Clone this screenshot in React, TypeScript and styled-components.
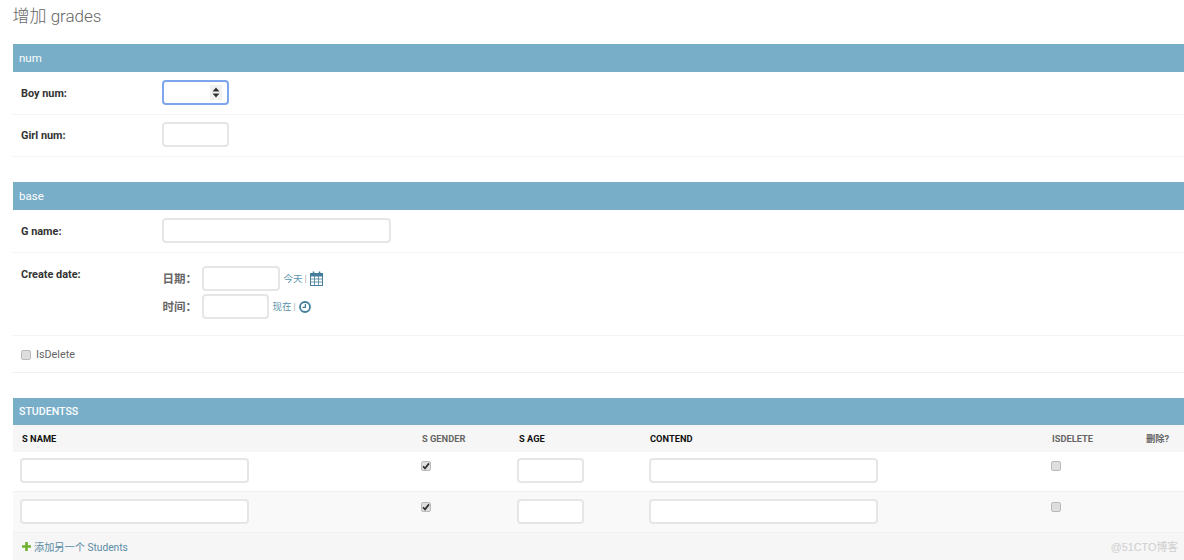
import React from "react";
import styled, { createGlobalStyle } from "styled-components";

const Global = createGlobalStyle`
  html, body { margin: 0; padding: 0; background: #fff; }
  body { font-family: Roboto, "Noto Sans CJK SC", "Liberation Sans", sans-serif; height: 560px; overflow: hidden; }
`;
const Page = styled.div`position: relative; height: 560px; overflow: hidden; padding-left: 13px;`;
const Title = styled.h1`
  margin: 0 0 0 -0.5px; height: 44px; padding-top: 6px; box-sizing: border-box; font-size: 17px; line-height: 21px;
  font-weight: 300; color: #666;
`;
const Module = styled.section`margin-bottom: 25px;`;
const ModuleHead = styled.h2<{ $h?: number; $small?: boolean }>`
  margin: 0; height: ${p => p.$h ?? 28}px; box-sizing: border-box; padding-left: 6px; background: #79aec8; color: #fbfdfe;
  font-size: ${p => (p.$small ? 10.6 : 11.5)}px; line-height: ${p => p.$h ?? 28}px; font-weight: ${p => (p.$small ? 500 : 400)};
`;
const Row = styled.div<{ $h: number; $top?: number }>`
  display: flex; height: ${p => p.$h}px; box-sizing: border-box; border-bottom: 1px solid #f3f3f3;
  padding-left: 8px; padding-top: ${p => p.$top ?? 8}px;
`;
const Label = styled.label<{ $top?: number }>`
  width: 141.4px; flex: none; font-size: 10.9px; line-height: 13px; font-weight: 700; color: #333; padding-top: ${p => p.$top ?? 7}px;
`;
const Field = styled.div`position: relative; height: fit-content;`;
const Input = styled.input<{ $w: number; $focus?: boolean }>`
  display: block; width: ${p => p.$w}px; height: 25px; box-sizing: border-box; padding: 0 5px; background: #fff;
  border: 2px solid ${p => (p.$focus ? "#7ea6ee" : "#e6e6e6")}; border-radius: 4px; outline: none;
`;
const Spinner = styled.span`
  position: absolute; right: 7px; top: 5px; width: 12px; height: 15px; background: #f1f1f1;
  display: flex; align-items: center; justify-content: center;
`;
const DateBlock = styled.div`display: flex; flex-direction: column; gap: 3px; padding-top: 5px;`;
const DateLine = styled.div`display: flex; align-items: center; height: 25px;`;
const DateLabel = styled.span`
  width: 39.5px; flex: none; font-size: 11.5px; font-weight: 700; color: #666; line-height: 25px; position: relative; top: 1px;
`;
const Shortcut = styled.a`
  margin-left: 3.5px; font-size: 9.5px; color: #5a93ab; display: flex; align-items: center; gap: 2px; line-height: 14px;
`;
const Sep = styled.span`color: #aaa; font-size: 9px;`;
const Plain = styled.span`font-size: 10.8px; color: #666; margin-left: 5px; line-height: 14px;`;
const CheckRow = styled.div`display: flex; align-items: center; height: 37px; box-sizing: border-box; padding: 1px 0 0 8px; border-bottom: 1px solid #f0f0f0;`;
const Box = styled.span`
  display: flex; align-items: center; justify-content: center; width: 8px; height: 8px; border: 1px solid #bbb;
  border-radius: 2px; background: #dedede; flex: none;
`;
const columns = "401px 97px 131px 401px 95px 1fr";
const TableHead = styled.div`
  display: grid; grid-template-columns: ${columns}; height: 27px; background: #f6f6f6; align-items: center;
`;
const Th = styled.div<{ $muted?: boolean; $pad?: number }>`
  padding-left: ${p => p.$pad ?? 8}px; font-size: 9.3px; font-weight: 700; color: ${p => (p.$muted ? "#666" : "#111")};
  text-transform: uppercase; line-height: 12px;
`;
const TableRow = styled.div<{ $alt?: boolean; $h: number }>`
  display: grid; grid-template-columns: ${columns}; height: ${p => p.$h}px; box-sizing: border-box;
  background: ${p => (p.$alt ? "#f9f9f9" : "#fff")}; border-bottom: 1px solid #f0f0f0; align-items: start;
`;
const Td = styled.div<{ $top: number; $left: number }>`padding: ${p => p.$top}px 0 0 ${p => p.$left}px;`;
const AddRow = styled.div`
  display: flex; align-items: center; height: 27px; gap: 3px; padding-left: 9px; background: #f6f6f6;
  font-size: 10.2px; color: #5a8ba5;
`;
const Watermark = styled.span`
  position: absolute; right: 6px; bottom: 6px; font-size: 10.8px; line-height: 14px; color: #cfcfcf;
  font-family: "Liberation Sans", "Noto Sans CJK SC", sans-serif;
`;

const Check = () => (
  <Box>
    <svg width="8" height="8" viewBox="0 0 8 8"><path d="M1 4.2 3 6.4 7 1.4" fill="none" stroke="#333" strokeWidth="1.7" /></svg>
  </Box>
);

const Calendar = () => (
  <svg width="13" height="15" viewBox="0 0 13 15" style={{ marginLeft: 1 }}>
    <rect x="0.5" y="2.5" width="12" height="12" fill="none" stroke="#447e9b" />
    <path d="M0 3h13v2.5H0z" fill="#447e9b" />
    <path d="M3.5 0.5v3M9.5 0.5v3" stroke="#447e9b" strokeWidth="1.6" />
    <path d="M4.5 5v9M8.5 5v9M1 8h11M1 11h11" stroke="#447e9b" strokeWidth="0.8" />
  </svg>
);

const Clock = () => (
  <svg width="12" height="12" viewBox="0 0 12 12" style={{ marginLeft: 1 }}>
    <circle cx="6" cy="6" r="5" fill="none" stroke="#447e9b" strokeWidth="1.8" />
    <path d="M6.4 3v3.4H3.6" fill="none" stroke="#447e9b" strokeWidth="1.3" />
  </svg>
);

const Arrows = () => (
  <svg width="8" height="11" viewBox="0 0 8 11"><path d="M4 0.5 7.5 4.5H.5zM4 10.5.5 6.5h7z" fill="#333" /></svg>
);

const Plus = () => (
  <svg width="9" height="9" viewBox="0 0 9 9"><path d="M3.2 0h2.6v3.2H9v2.6H5.8V9H3.2V5.8H0V3.2h3.2z" fill="#6fb12f" /></svg>
);

const rows = [
  { h: 40, top: 6, boxTop: 9, alt: false },
  { h: 41, top: 7, boxTop: 10, alt: true },
];

export default function App() {
  return (
    <Page>
      <Global />
      <Title>增加 grades</Title>

      <Module>
        <ModuleHead>num</ModuleHead>
        <Row $h={43}>
          <Label>Boy num:</Label>
          <Field>
            <Input $w={67} $focus />
            <Spinner><Arrows /></Spinner>
          </Field>
        </Row>
        <Row $h={42} $top={7}>
          <Label>Girl num:</Label>
          <Input $w={67} />
        </Row>
      </Module>

      <Module>
        <ModuleHead>base</ModuleHead>
        <Row $h={43}>
          <Label>G name:</Label>
          <Input $w={229} />
        </Row>
        <Row $h={83} $top={8}>
          <Label $top={7}>Create date:</Label>
          <DateBlock>
            <DateLine>
              <DateLabel>日期：</DateLabel>
              <Input $w={78} />
              <Shortcut>今天<Sep>|</Sep><Calendar /></Shortcut>
            </DateLine>
            <DateLine>
              <DateLabel>时间：</DateLabel>
              <Input $w={67} />
              <Shortcut>现在<Sep>|</Sep><Clock /></Shortcut>
            </DateLine>
          </DateBlock>
        </Row>
        <CheckRow>
          <Box />
          <Plain>IsDelete</Plain>
        </CheckRow>
      </Module>

      <section>
        <ModuleHead $h={27} $small>STUDENTSS</ModuleHead>
        <TableHead>
          <Th $pad={9}>S name</Th>
          <Th $muted>S gender</Th>
          <Th>S age</Th>
          <Th>Contend</Th>
          <Th $muted $pad={9}>IsDelete</Th>
          <Th $muted>删除?</Th>
        </TableHead>
        {rows.map((r, i) => (
          <TableRow key={i} $alt={r.alt} $h={r.h}>
            <Td $top={r.top} $left={7}><Input $w={229} /></Td>
            <Td $top={r.boxTop} $left={7}><Check /></Td>
            <Td $top={r.top} $left={6}><Input $w={67} /></Td>
            <Td $top={r.top} $left={7}><Input $w={229} /></Td>
            <Td $top={r.boxTop} $left={7.5}><Box /></Td>
            <div />
          </TableRow>
        ))}
        <AddRow><Plus />添加另一个 Students</AddRow>
      </section>
      <Watermark>@51CTO博客</Watermark>
    </Page>
  );
}
